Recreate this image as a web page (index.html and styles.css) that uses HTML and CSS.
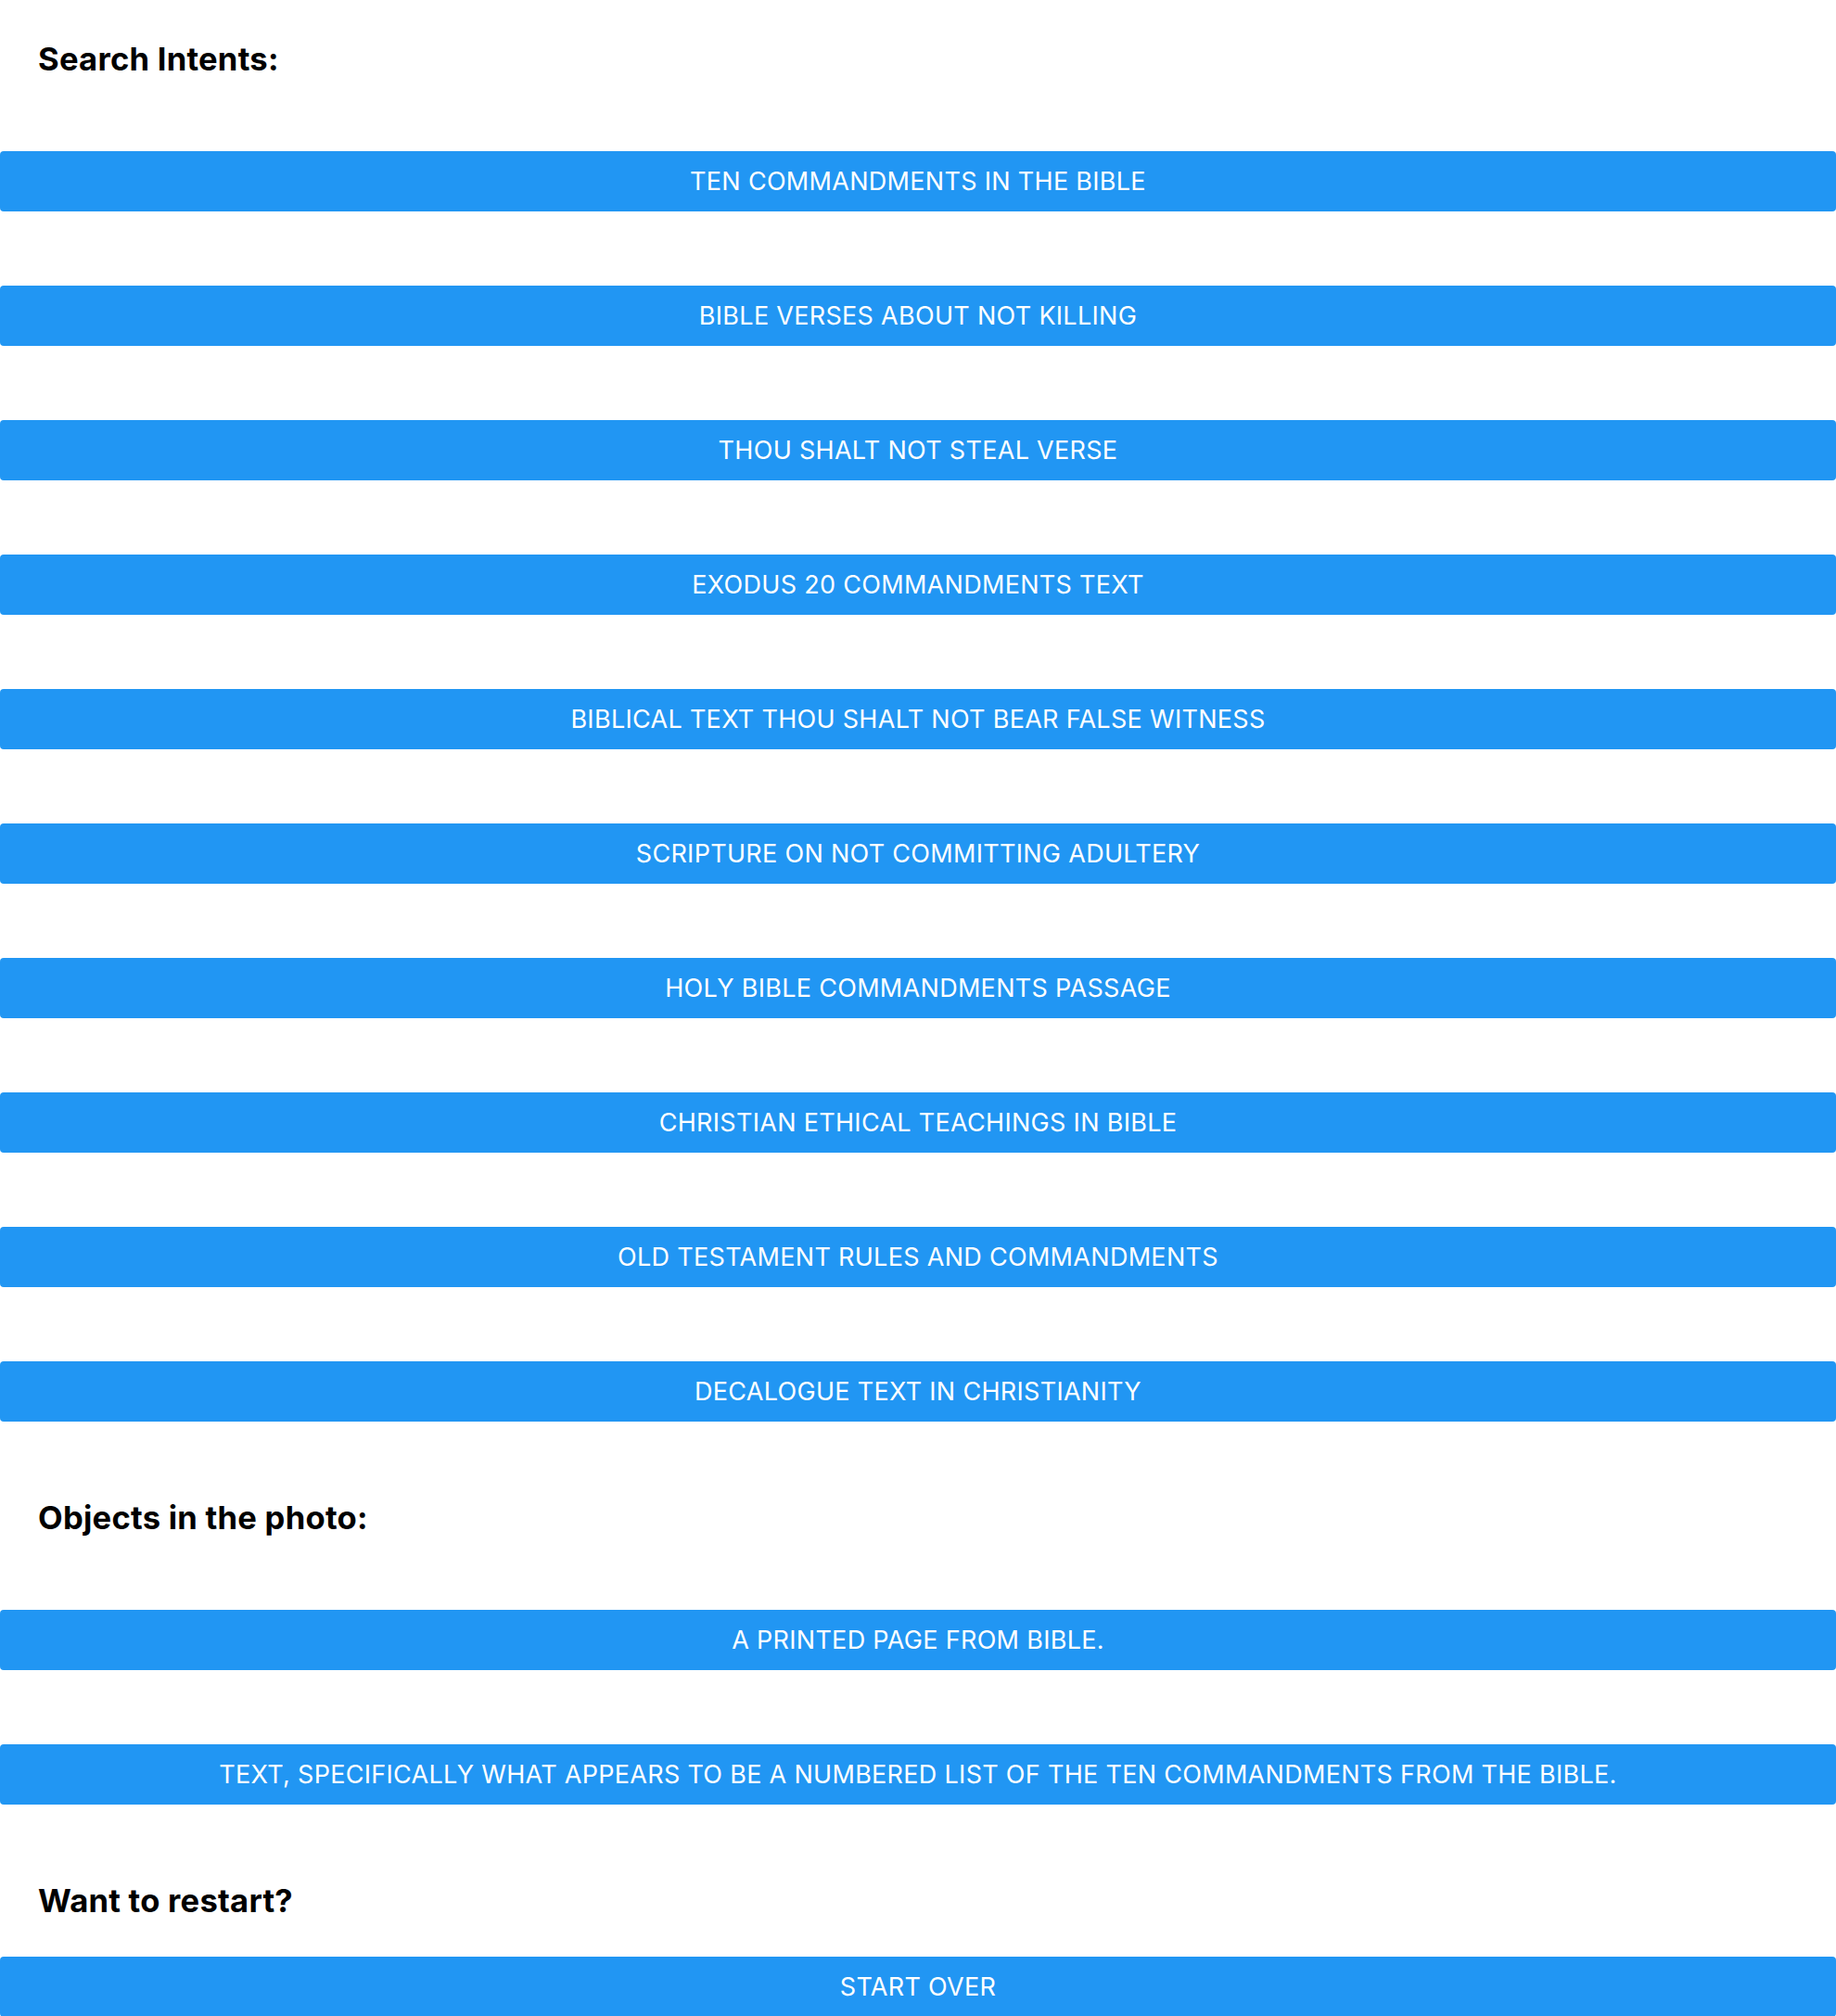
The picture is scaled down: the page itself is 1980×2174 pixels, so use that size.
FILE: index.html
```html
<!DOCTYPE html>
<html lang="en">
<head>
<meta charset="utf-8">
<title>Search Intents</title>
<link rel="stylesheet" href="styles.css">
</head>
<body>
<main class="page">
  <section class="section section-intents">
    <h2 class="section-title">Search Intents:</h2>
    <div class="button-list">
      <button class="action-btn"><span>Ten commandments in the Bible</span></button>
      <button class="action-btn"><span>Bible verses about not killing</span></button>
      <button class="action-btn"><span>Thou shalt not steal verse</span></button>
      <button class="action-btn"><span>Exodus 20 commandments text</span></button>
      <button class="action-btn"><span>Biblical text thou shalt not bear false witness</span></button>
      <button class="action-btn"><span>Scripture on not committing adultery</span></button>
      <button class="action-btn"><span>Holy Bible commandments passage</span></button>
      <button class="action-btn"><span>Christian ethical teachings in Bible</span></button>
      <button class="action-btn"><span>Old Testament rules and commandments</span></button>
      <button class="action-btn"><span>Decalogue text in Christianity</span></button>
    </div>
  </section>
  <section class="section section-objects">
    <h2 class="section-title">Objects in the photo:</h2>
    <div class="button-list">
      <button class="action-btn"><span>A printed page from Bible.</span></button>
      <button class="action-btn"><span>Text, specifically what appears to be a numbered list of the Ten Commandments from the Bible.</span></button>
    </div>
  </section>
  <section class="section section-restart">
    <h2 class="section-title">Want to restart?</h2>
    <div class="button-list">
      <button class="action-btn"><span>Start over</span></button>
    </div>
  </section>
</main>
</body>
</html>
```
FILE: styles.css
```css
html, body {
  margin: 0;
  padding: 0;
  background: #ffffff;
}

body {
  font-family: Inter, "Noto Sans", "Liberation Sans", sans-serif;
  color: #000000;
}

.page {
  display: flex;
  flex-direction: column;
  padding-top: 43px;
}

.section {
  display: flex;
  flex-direction: column;
}

.section + .section {
  margin-top: 83px;
}

.section-title {
  margin: 0 0 80px 0;
  padding-left: 41px;
  font-size: 34.6px;
  line-height: 40px;
  font-weight: 700;
  letter-spacing: 0.25px;
}

.section-restart .section-title {
  margin-bottom: 41px;
}

.button-list {
  display: flex;
  flex-direction: column;
  gap: 80px;
}

.action-btn {
  display: flex;
  align-items: center;
  justify-content: center;
  width: 100%;
  height: 65px;
  margin: 0;
  padding: 0 16px;
  border: none;
  border-radius: 4px;
  background: #2196f3;
  color: #ffffff;
  font-family: Inter, "Noto Sans", "Liberation Sans", sans-serif;
  font-size: 27px;
  font-weight: 400;
  text-transform: uppercase;
  letter-spacing: 0.3px;
  cursor: pointer;
}
```
